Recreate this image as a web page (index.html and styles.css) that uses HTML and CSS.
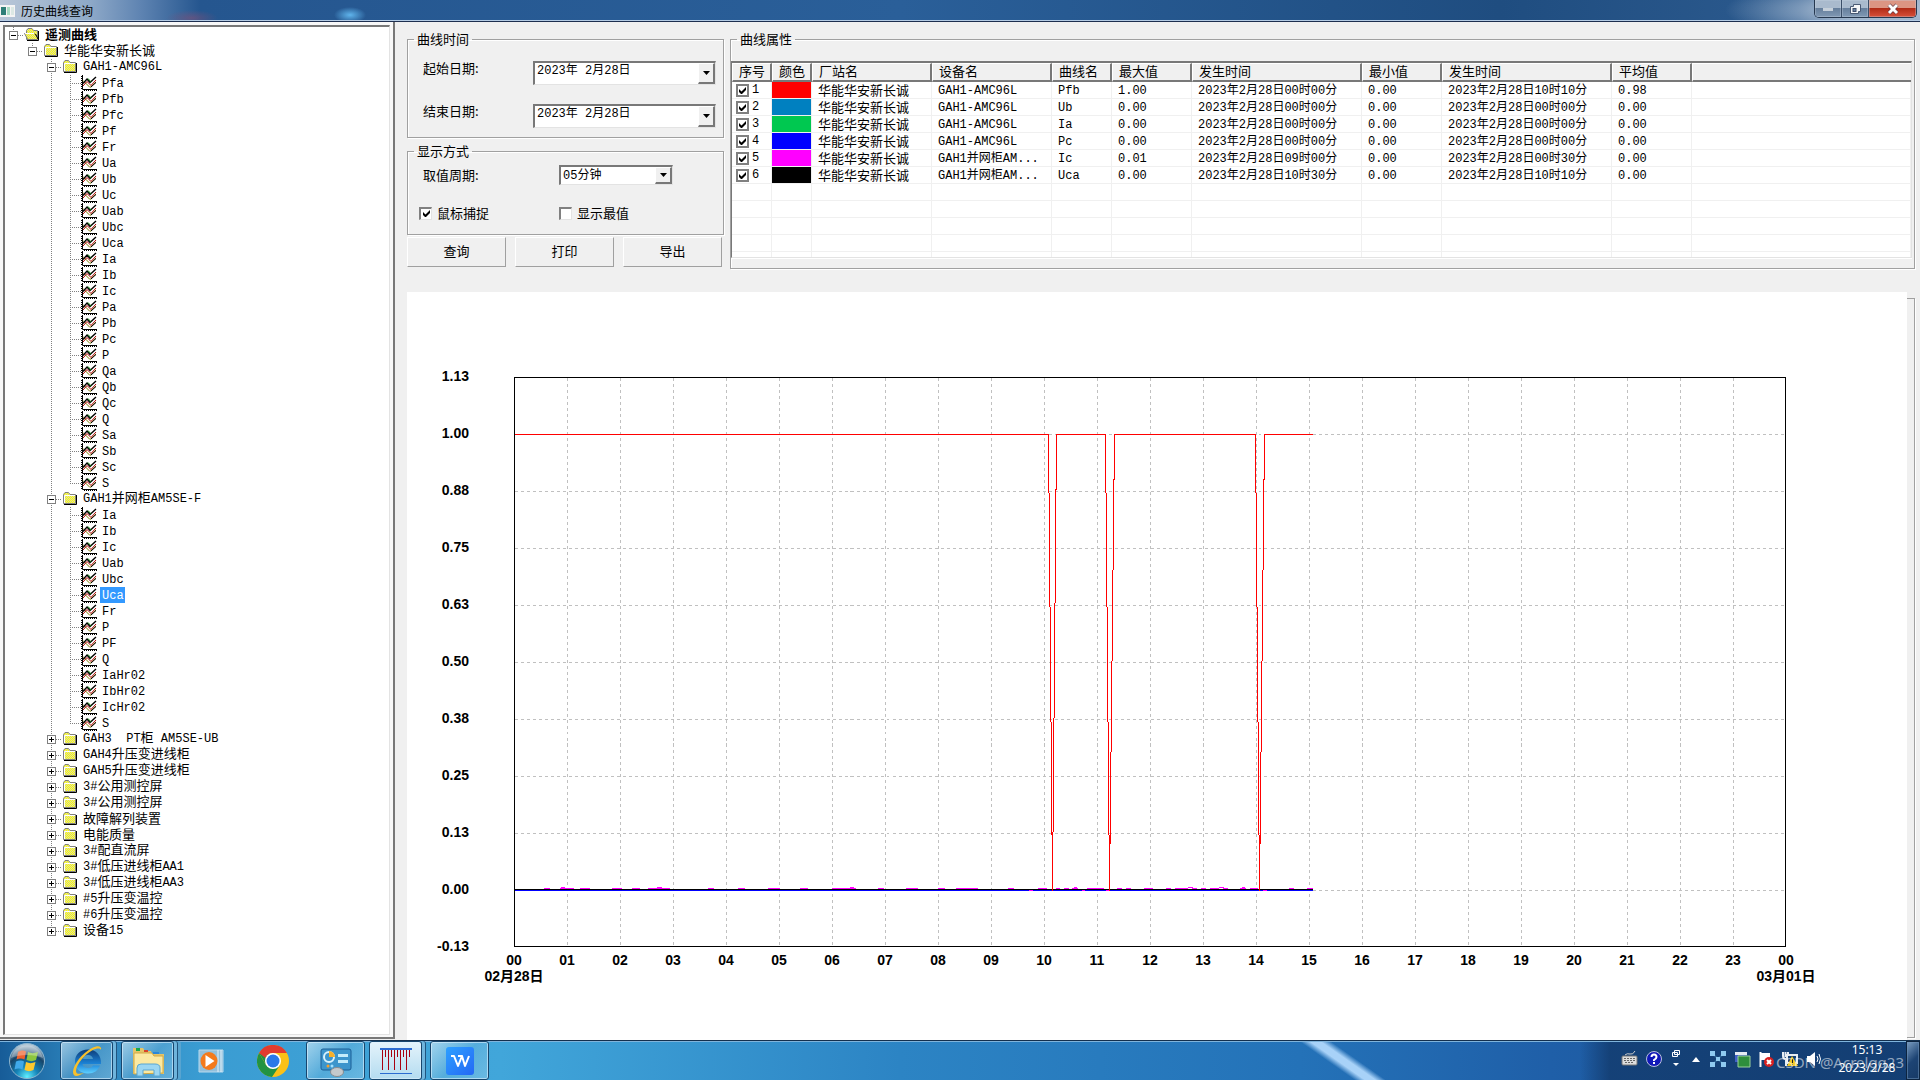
FILE: index.html
```html
<!DOCTYPE html>
<html lang="zh-CN">
<head>
<meta charset="utf-8">
<title>历史曲线查询</title>
<link rel="stylesheet" href="styles.css">
</head>
<body>
<svg class="sprites" aria-hidden="true">
  <defs>
    <pattern id="dither" width="2" height="2" patternUnits="userSpaceOnUse"><rect width="2" height="2" fill="#ffff00"/><path d="M0 0h1v1H0zM1 1h1v1H1z" fill="#d8d8b0"/></pattern>
    <linearGradient id="g-ie" x1="0" y1="0" x2="0" y2="1"><stop offset="0" stop-color="#0d3c78"/><stop offset=".6" stop-color="#1c84d8"/><stop offset="1" stop-color="#5fd0ff"/></linearGradient>
    <radialGradient id="g-orb" cx=".5" cy=".95" r=".9"><stop offset="0" stop-color="#5ff0ff"/><stop offset=".35" stop-color="#1583b8"/><stop offset=".7" stop-color="#174468"/><stop offset="1" stop-color="#b5c8d6"/></radialGradient>
    <linearGradient id="g-wps" x1="0" y1="0" x2="1" y2="1"><stop offset="0" stop-color="#2da0ff"/><stop offset="1" stop-color="#2468f5"/></linearGradient>
  </defs>
  <symbol id="folder" viewBox="0 0 16 16">
    <path d="M1.500 12.500V3.500L3 1.500H6.500L8 3.500H13.500V12.500z" fill="url(#dither)" stroke="#808080"/>
    <path d="M2.500 12V4.500H13" fill="none" stroke="#fff"/>
    <path d="M2 13.500H14.500V4" fill="none" stroke="#000"/>
  </symbol>
  <symbol id="folder-open" viewBox="0 0 16 16">
    <path d="M2.500 12.500V3.500L4 1.500H8L9.500 3.500H13.500V12.500z" fill="url(#dither)" stroke="#808080"/>
    <path d="M3.500 12L.5 6.500H10.500L12.500 9" fill="url(#dither)" stroke="#808080"/>
    <path d="M1 6.500H10" stroke="#fff"/>
    <path d="M3 13.500H14.500V4M11.500 7L14 12" fill="none" stroke="#000"/>
  </symbol>
  <symbol id="curve" viewBox="0 0 16 16">
    <path d="M1.500 0V14.500H16" fill="none" stroke="#000"/>
    <path d="M.5 1V14" stroke="#000" stroke-dasharray="1 1"/>
    <path d="M3 15.500H16" stroke="#000" stroke-dasharray="1 1"/>
    <path d="M2 5.500L9 12.500L15 7" fill="none" stroke="#808000"/>
    <path d="M2 11L6 6.500L10 10.500L15 5" fill="none" stroke="#b00000"/>
    <path d="M2 8.500L6 4L9 7.500L15 2" fill="none" stroke="#000" stroke-width="1.400"/>
    <path d="M7 3.500L10 7" stroke="#008000"/>
    <path d="M10 12L15 7.500" stroke="#000"/>
  </symbol>
</svg>

<header class="titlebar">
  <svg class="app-icon" viewBox="0 0 15 12"><rect width="15" height="12" fill="#f4f4f4"/><rect x="1" y="2" width="5" height="8" fill="#2f7f78"/><rect x="7" y="2" width="3" height="8" fill="#a9dcc4"/><rect x="11" y="2" width="3" height="8" fill="#dce8e4"/></svg>
  <h1>历史曲线查询</h1>
  <div class="caption">
    <button class="cap" aria-label="最小化"><svg width="12" height="12"><rect x="1" y="5" width="10" height="3" fill="#c6d0da"/></svg></button>
    <button class="cap" aria-label="还原"><svg width="14" height="12"><path d="M5.500 1.500h7v7h-2v2h-8v-7h3z" fill="#f4f6f8" stroke="#4a5a74"/><rect x="5" y="5.500" width="3" height="3" fill="#6b84a4" stroke="#3c4c68"/></svg></button>
    <button class="cap close" aria-label="关闭"><svg width="14" height="12"><path d="M3 2l8 8M11 2l-8 8" stroke="#5b3440" stroke-width="4"/><path d="M3 2l8 8M11 2l-8 8" stroke="#fff" stroke-width="3"/></svg></button>
  </div>
</header>

<main class="workspace">
  <nav class="tree-frame" aria-label="遥测曲线">
    <ul class="tree">
      <li><div class="node"><button class="toggle" aria-label="折叠"></button><i></i><svg><use href="#folder-open"/></svg><b>遥测曲线</b></div>
        <ul><li><div class="node"><button class="toggle" aria-label="折叠"></button><i></i><svg><use href="#folder"/></svg><span>华能华安新长诚</span></div>
          <ul>
            <li><div class="node"><button class="toggle" aria-label="折叠"></button><i></i><svg><use href="#folder"/></svg><span><code>GAH1-AMC96L</code></span></div>
              <ul>
                <li class="node leaf"><i></i><svg><use href="#curve"/></svg><code>Pfa</code></li>
                <li class="node leaf"><i></i><svg><use href="#curve"/></svg><code>Pfb</code></li>
                <li class="node leaf"><i></i><svg><use href="#curve"/></svg><code>Pfc</code></li>
                <li class="node leaf"><i></i><svg><use href="#curve"/></svg><code>Pf</code></li>
                <li class="node leaf"><i></i><svg><use href="#curve"/></svg><code>Fr</code></li>
                <li class="node leaf"><i></i><svg><use href="#curve"/></svg><code>Ua</code></li>
                <li class="node leaf"><i></i><svg><use href="#curve"/></svg><code>Ub</code></li>
                <li class="node leaf"><i></i><svg><use href="#curve"/></svg><code>Uc</code></li>
                <li class="node leaf"><i></i><svg><use href="#curve"/></svg><code>Uab</code></li>
                <li class="node leaf"><i></i><svg><use href="#curve"/></svg><code>Ubc</code></li>
                <li class="node leaf"><i></i><svg><use href="#curve"/></svg><code>Uca</code></li>
                <li class="node leaf"><i></i><svg><use href="#curve"/></svg><code>Ia</code></li>
                <li class="node leaf"><i></i><svg><use href="#curve"/></svg><code>Ib</code></li>
                <li class="node leaf"><i></i><svg><use href="#curve"/></svg><code>Ic</code></li>
                <li class="node leaf"><i></i><svg><use href="#curve"/></svg><code>Pa</code></li>
                <li class="node leaf"><i></i><svg><use href="#curve"/></svg><code>Pb</code></li>
                <li class="node leaf"><i></i><svg><use href="#curve"/></svg><code>Pc</code></li>
                <li class="node leaf"><i></i><svg><use href="#curve"/></svg><code>P</code></li>
                <li class="node leaf"><i></i><svg><use href="#curve"/></svg><code>Qa</code></li>
                <li class="node leaf"><i></i><svg><use href="#curve"/></svg><code>Qb</code></li>
                <li class="node leaf"><i></i><svg><use href="#curve"/></svg><code>Qc</code></li>
                <li class="node leaf"><i></i><svg><use href="#curve"/></svg><code>Q</code></li>
                <li class="node leaf"><i></i><svg><use href="#curve"/></svg><code>Sa</code></li>
                <li class="node leaf"><i></i><svg><use href="#curve"/></svg><code>Sb</code></li>
                <li class="node leaf"><i></i><svg><use href="#curve"/></svg><code>Sc</code></li>
                <li class="node leaf"><i></i><svg><use href="#curve"/></svg><code>S</code></li>
              </ul>
            </li>
            <li><div class="node"><button class="toggle" aria-label="折叠"></button><i></i><svg><use href="#folder"/></svg><span><code>GAH1</code>并网柜<code>AM5SE-F</code></span></div>
              <ul>
                <li class="node leaf"><i></i><svg><use href="#curve"/></svg><code>Ia</code></li>
                <li class="node leaf"><i></i><svg><use href="#curve"/></svg><code>Ib</code></li>
                <li class="node leaf"><i></i><svg><use href="#curve"/></svg><code>Ic</code></li>
                <li class="node leaf"><i></i><svg><use href="#curve"/></svg><code>Uab</code></li>
                <li class="node leaf"><i></i><svg><use href="#curve"/></svg><code>Ubc</code></li>
                <li class="node leaf"><i></i><svg><use href="#curve"/></svg><code class="selected">Uca</code></li>
                <li class="node leaf"><i></i><svg><use href="#curve"/></svg><code>Fr</code></li>
                <li class="node leaf"><i></i><svg><use href="#curve"/></svg><code>P</code></li>
                <li class="node leaf"><i></i><svg><use href="#curve"/></svg><code>PF</code></li>
                <li class="node leaf"><i></i><svg><use href="#curve"/></svg><code>Q</code></li>
                <li class="node leaf"><i></i><svg><use href="#curve"/></svg><code>IaHr02</code></li>
                <li class="node leaf"><i></i><svg><use href="#curve"/></svg><code>IbHr02</code></li>
                <li class="node leaf"><i></i><svg><use href="#curve"/></svg><code>IcHr02</code></li>
                <li class="node leaf"><i></i><svg><use href="#curve"/></svg><code>S</code></li>
              </ul>
            </li>
            <li><div class="node"><button class="toggle closed" aria-label="展开"></button><i></i><svg><use href="#folder"/></svg><span><code>GAH3  PT</code>柜<code> AM5SE-UB</code></span></div></li>
            <li><div class="node"><button class="toggle closed" aria-label="展开"></button><i></i><svg><use href="#folder"/></svg><span><code>GAH4</code>升压变进线柜</span></div></li>
            <li><div class="node"><button class="toggle closed" aria-label="展开"></button><i></i><svg><use href="#folder"/></svg><span><code>GAH5</code>升压变进线柜</span></div></li>
            <li><div class="node"><button class="toggle closed" aria-label="展开"></button><i></i><svg><use href="#folder"/></svg><span><code>3#</code>公用测控屏</span></div></li>
            <li><div class="node"><button class="toggle closed" aria-label="展开"></button><i></i><svg><use href="#folder"/></svg><span><code>3#</code>公用测控屏</span></div></li>
            <li><div class="node"><button class="toggle closed" aria-label="展开"></button><i></i><svg><use href="#folder"/></svg><span>故障解列装置</span></div></li>
            <li><div class="node"><button class="toggle closed" aria-label="展开"></button><i></i><svg><use href="#folder"/></svg><span>电能质量</span></div></li>
            <li><div class="node"><button class="toggle closed" aria-label="展开"></button><i></i><svg><use href="#folder"/></svg><span><code>3#</code>配直流屏</span></div></li>
            <li><div class="node"><button class="toggle closed" aria-label="展开"></button><i></i><svg><use href="#folder"/></svg><span><code>3#</code>低压进线柜<code>AA1</code></span></div></li>
            <li><div class="node"><button class="toggle closed" aria-label="展开"></button><i></i><svg><use href="#folder"/></svg><span><code>3#</code>低压进线柜<code>AA3</code></span></div></li>
            <li><div class="node"><button class="toggle closed" aria-label="展开"></button><i></i><svg><use href="#folder"/></svg><span><code>#5</code>升压变温控</span></div></li>
            <li><div class="node"><button class="toggle closed" aria-label="展开"></button><i></i><svg><use href="#folder"/></svg><span><code>#6</code>升压变温控</span></div></li>
            <li><div class="node"><button class="toggle closed" aria-label="展开"></button><i></i><svg><use href="#folder"/></svg><span>设备<code>15</code></span></div></li>
          </ul>
        </li></ul>
      </li>
    </ul>
  </nav>

  <section class="content">
    <div class="top">
      <form class="query">
        <fieldset class="group dates">
          <legend>曲线时间</legend>
          <div class="field"><label for="start">起始日期:</label><span class="drop date"><input id="start" type="text" value="2023年 2月28日"><button type="button" class="arrow" aria-label="选择起始日期"></button></span></div>
          <div class="field"><label for="end">结束日期:</label><span class="drop date"><input id="end" type="text" value="2023年 2月28日"><button type="button" class="arrow" aria-label="选择结束日期"></button></span></div>
        </fieldset>
        <fieldset class="group mode">
          <legend>显示方式</legend>
          <div class="field"><label for="period">取值周期:</label><span class="drop period"><select id="period"><option>05分钟</option></select><span class="arrow"></span></span></div>
          <div class="checks">
            <label><input type="checkbox" checked>鼠标捕捉</label>
            <label><input type="checkbox">显示最值</label>
          </div>
        </fieldset>
        <div class="actions"><button type="button">查询</button><button type="button">打印</button><button type="button">导出</button></div>
      </form>

      <fieldset class="group props">
        <legend>曲线属性</legend>
        <div class="list">
          <table>
            <colgroup><col class="w40"><col class="w40"><col class="w120"><col class="w120"><col class="w60"><col class="w80"><col class="w170"><col class="w80"><col class="w170"><col class="w80"><col></colgroup>
            <thead><tr><th>序号</th><th>颜色</th><th>厂站名</th><th>设备名</th><th>曲线名</th><th>最大值</th><th>发生时间</th><th>最小值</th><th>发生时间</th><th>平均值</th><th></th></tr></thead>
            <tbody>
              <tr><td class="no"><label><input type="checkbox" checked>1</label></td><td class="red"></td><td class="site">华能华安新长诚</td><td>GAH1-AMC96L</td><td>Pfb</td><td>1.00</td><td>2023年2月28日00时00分</td><td>0.00</td><td>2023年2月28日10时10分</td><td>0.98</td><td></td></tr>
              <tr><td class="no"><label><input type="checkbox" checked>2</label></td><td class="azure"></td><td class="site">华能华安新长诚</td><td>GAH1-AMC96L</td><td>Ub</td><td>0.00</td><td>2023年2月28日00时00分</td><td>0.00</td><td>2023年2月28日00时00分</td><td>0.00</td><td></td></tr>
              <tr><td class="no"><label><input type="checkbox" checked>3</label></td><td class="green"></td><td class="site">华能华安新长诚</td><td>GAH1-AMC96L</td><td>Ia</td><td>0.00</td><td>2023年2月28日00时00分</td><td>0.00</td><td>2023年2月28日00时00分</td><td>0.00</td><td></td></tr>
              <tr><td class="no"><label><input type="checkbox" checked>4</label></td><td class="blue"></td><td class="site">华能华安新长诚</td><td>GAH1-AMC96L</td><td>Pc</td><td>0.00</td><td>2023年2月28日00时00分</td><td>0.00</td><td>2023年2月28日00时00分</td><td>0.00</td><td></td></tr>
              <tr><td class="no"><label><input type="checkbox" checked>5</label></td><td class="magenta"></td><td class="site">华能华安新长诚</td><td>GAH1并网柜AM...</td><td>Ic</td><td>0.01</td><td>2023年2月28日09时00分</td><td>0.00</td><td>2023年2月28日00时30分</td><td>0.00</td><td></td></tr>
              <tr><td class="no"><label><input type="checkbox" checked>6</label></td><td class="black"></td><td class="site">华能华安新长诚</td><td>GAH1并网柜AM...</td><td>Uca</td><td>0.00</td><td>2023年2月28日10时30分</td><td>0.00</td><td>2023年2月28日10时10分</td><td>0.00</td><td></td></tr>
              <tr><td></td><td></td><td></td><td></td><td></td><td></td><td></td><td></td><td></td><td></td><td></td></tr>
              <tr><td></td><td></td><td></td><td></td><td></td><td></td><td></td><td></td><td></td><td></td><td></td></tr>
              <tr><td></td><td></td><td></td><td></td><td></td><td></td><td></td><td></td><td></td><td></td><td></td></tr>
              <tr><td></td><td></td><td></td><td></td><td></td><td></td><td></td><td></td><td></td><td></td><td></td></tr>
              <tr><td></td><td></td><td></td><td></td><td></td><td></td><td></td><td></td><td></td><td></td><td></td></tr>
            </tbody>
          </table>
        </div>
      </fieldset>
    </div>

    <div class="chart-row">
      <div class="chart">
        <svg viewBox="0 0 1500 746" preserveAspectRatio="xMinYMin meet" role="img" aria-label="历史曲线">
          <g class="plot" transform="translate(.5 .5)">
            <rect x="107" y="85" width="1271" height="569" stroke="#000"/>
            <path class="grid" d="M160 85V654M213 85V654M266 85V654M319 85V654M372 85V654M425 85V654M478 85V654M531 85V654M584 85V654M637 85V654M690 85V654M743 85V654M796 85V654M849 85V654M902 85V654M955 85V654M1008 85V654M1061 85V654M1114 85V654M1167 85V654M1220 85V654M1273 85V654M1326 85V654"/>
            <path class="grid" d="M107 142H1378M107 199H1378M107 256H1378M107 313H1378M107 370H1378M107 427H1378M107 484H1378M107 541H1378M107 598H1378"/>
            <path d="M107 598H905" stroke="#00f"/>
            <path d="M107 597H905" stroke="#000"/>
            <path d="M136 596H142M152 596H166M172 596H182M204 596H214M224 596H232M240 596H262M300 596H306M330 596H337M360 596H372M392 596H400M424 596H448M470 596H476M498 596H510M530 596H537M548 596H570M600 596H606M630 596H639M648 596H652M656 596H661M664 596H670M679 596H696M709 596H714M718 596H723M736 596H745M758 596H763M767 596H780M784 596H789M793 596H798M802 596H811M815 596H820M832 596H838M842 596H850M881 596H886M899 596H905M153 595H157M249 595H254M442 595H446M666 595H669M780 595H785M811 595H816M834 595H837M621 598H625M674 598H677M698 598H701M855 598H859" stroke="#f0f"/>
            <path d="M107 142H641L645 598L649 142H698L702 598L707 142H848L852 598L857 142H905" stroke="#f00"/>
          </g>
          <g class="ylabels">
            <text x="62" y="89">1.13</text><text x="62" y="146">1.00</text><text x="62" y="203">0.88</text><text x="62" y="260">0.75</text><text x="62" y="317">0.63</text><text x="62" y="374">0.50</text><text x="62" y="431">0.38</text><text x="62" y="488">0.25</text><text x="62" y="545">0.13</text><text x="62" y="602">0.00</text><text x="62" y="659">-0.13</text>
          </g>
          <g class="xlabels">
            <text x="107" y="673">00</text><text x="160" y="673">01</text><text x="213" y="673">02</text><text x="266" y="673">03</text><text x="319" y="673">04</text><text x="372" y="673">05</text><text x="425" y="673">06</text><text x="478" y="673">07</text><text x="531" y="673">08</text><text x="584" y="673">09</text><text x="637" y="673">10</text><text x="690" y="673">11</text><text x="743" y="673">12</text><text x="796" y="673">13</text><text x="849" y="673">14</text><text x="902" y="673">15</text><text x="955" y="673">16</text><text x="1008" y="673">17</text><text x="1061" y="673">18</text><text x="1114" y="673">19</text><text x="1167" y="673">20</text><text x="1220" y="673">21</text><text x="1273" y="673">22</text><text x="1326" y="673">23</text><text x="1379" y="673">00</text>
            <text x="107" y="689">02月28日</text><text x="1379" y="689">03月01日</text>
          </g>
        </svg>
      </div>
      <div class="edge"></div>
    </div>
  </section>
</main>

<footer class="taskbar">
  <button class="orb" aria-label="开始"><svg width="38" height="38" viewBox="0 0 38 38"><circle cx="19" cy="19" r="17.500" fill="url(#g-orb)" stroke="#8fb6cf"/><path d="M10 10c3-2 6-2 8-.5l-1.500 8c-3-1.500-5-1.500-8 0z" fill="#f0622d"/><path d="M20 10c3 1.500 6 1.500 10 0l-2 8c-3 1.500-6 1.500-9.500 0z" fill="#8cc63e"/><path d="M8 19.500c3-1.500 6-1.500 8 0l-1.500 8c-2.500-1.500-5-1.500-8 0z" fill="#3fa9ea"/><path d="M18 20c3 1.500 6 1.500 9.500 0l-2 8c-3 1.500-6 1.500-9 0z" fill="#fdc92e"/><path d="M3 16a16.500 16.500 0 0 1 32 0c-9-4-23-4-32 0z" fill="#fff" opacity=".3"/></svg></button>
  <button class="task open stack" aria-label="浏览器"><svg width="34" height="34" viewBox="0 0 34 34"><path d="M18 5.500c-8 0-13 5-13 12s5 12 13 12c6 0 10-3 12-8h-7c-1 2-3 2.500-5 2.500-3 0-5-1.500-5.500-4H31c.5-9-5-14.500-13-14.500zm-5 9.500c.5-2.500 2.500-4 5-4s4.500 1.500 5 4z" fill="url(#g-ie)"/><path d="M31 6c1-4-3-5-9-2C12 9 3 21 3 28c0 6 6 4 11 1-5 1.500-8 1-8-2 0-6 9-17 16-20.500 5-2.500 8-2.500 9-.5z" fill="#f7c02c"/></svg></button>
  <button class="task open stack stack2" aria-label="资源管理器"><svg width="34" height="34" viewBox="0 0 34 34"><path d="M2 6V4h10l2 3h6l1 3h12v20H2z" fill="#e5c466"/><path d="M3 9h18l2 3h9v17l-29 1z" fill="#fbe9a2" stroke="#cfa948"/><path d="M5 4h4v3H5z" fill="#15a84a"/><path d="M13 6h4v2h-4z" fill="#d8432c"/><path d="M22 8h6v2h-6z" fill="#2b87d8"/><path d="M6 32V24q0-4 4-4h14q5 0 5 4v8h-6v-6H12v6z" fill="#9bd6f2" stroke="#5aa6d2"/></svg></button>
  <button class="task plain" aria-label="播放器"><svg width="30" height="30" viewBox="0 0 30 30"><path d="M3 4h24v22H3z" fill="#a9c9df" opacity=".8" stroke="#d8eaf5"/><path d="M22 4v22M25 4v22" stroke="#e4f3fb"/><ellipse cx="13" cy="15" rx="8.500" ry="9" fill="#f47a1c"/><path d="M9.500 9l9 6-9 6z" fill="#fff"/></svg></button>
  <button class="task plain" aria-label="Chrome"><svg width="32" height="32" viewBox="0 0 32 32"><circle cx="16" cy="16" r="16" fill="#fbc116"/><path d="M2.100 8A16 16 0 0 0 15 32L23 20 16 24 9 20z" fill="#229342"/><path d="M2.100 8l7 12 5-10z" fill="#229342"/><path d="M2.100 8A16 16 0 0 1 29.900 8H16A8 8 0 0 0 8.500 13z" fill="#e33b2e"/><circle cx="16" cy="16" r="8" fill="#fff"/><circle cx="16" cy="16" r="6.500" fill="#2a79e8"/></svg></button>
  <button class="task open" aria-label="控制面板"><svg width="34" height="34" viewBox="0 0 34 34"><rect x="2" y="5" width="30" height="21" rx="2" fill="#3c95cc" stroke="#1c5f96"/><circle cx="10" cy="13" r="5" fill="none" stroke="#d7f1fc" stroke-width="2"/><path d="M10 13V7a6 6 0 0 1 6 6z" fill="#f6b02a"/><rect x="19" y="10" width="10" height="3" fill="#c3ecfb"/><rect x="19" y="16" width="10" height="3" fill="#c3ecfb"/><circle cx="9" cy="22" r="1.500" fill="#f6a02a"/><circle cx="13" cy="22" r="1.500" fill="#9fe0ff"/><ellipse cx="18" cy="28" rx="6.500" ry="4.500" fill="#c5c9cc" stroke="#858b90"/></svg></button>
  <button class="task open active stack" aria-label="历史曲线查询"><svg width="34" height="34" viewBox="0 0 34 34"><path d="M1 5h32" stroke="#2b6bd0" stroke-width="2"/><path d="M1 29.500h32" stroke="#2b6bd0"/><path d="M3.500 6v20M9.500 6v20M15.500 6v20M21.500 6v20M27.500 6v20M6.500 6v7M12.500 6v7M18.500 6v7M24.500 6v7M30.500 6v7" stroke="#a80010"/></svg></button>
  <button class="task open" aria-label="WPS"><svg width="34" height="34" viewBox="0 0 34 34"><rect x="3" y="3" width="28" height="28" rx="3" fill="url(#g-wps)"/><path d="M8 12h3l4 10 4-10 3 10 4-10M15 12h4" fill="none" stroke="#fff" stroke-width="2" stroke-linejoin="round"/></svg></button>

  <div class="tray">
    <svg width="18" height="18"><path d="M4 5q2-2 5-1t5-3" fill="none" stroke="#ccc"/><rect x="1" y="6" width="15" height="9" rx="1" fill="#ddd" stroke="#777"/><path d="M3 8.500h11M3 10.500h11M4 12.500h9" stroke="#666" stroke-dasharray="2 1"/></svg>
    <svg width="18" height="18" viewBox="0 0 18 18"><circle cx="9" cy="9" r="7.500" fill="#1018b8" stroke="#b8bedc"/><path d="M6.500 7q0-2.500 2.500-2.500T11.500 7q0 1.500-2.500 3v1M9 12v2" fill="none" stroke="#fff" stroke-width="2"/></svg>
    <svg width="14" height="22" viewBox="-2 0 14 22"><path d="M3.500 2.500h5v4h-5zM1.500 4.500h5v4h-5z" fill="#1b467c" stroke="#fff"/><path d="M2 15h6l-3 3z" fill="#fff"/></svg>
    <svg width="14" height="10" viewBox="-2 0 14 10"><path d="M1 8h8L5 3z" fill="#fff"/></svg>
    <svg width="18" height="18"><path d="M4 4l10 10M14 4L4 14" stroke="#2a5f8f" stroke-width="2"/><path d="M1 1h5v5H1zM12 1h5v5h-5zM1 12h5v5H1zM12 12h5v5h-5zM7 7h4v4H7z" fill="#8fcaf0"/></svg>
    <svg width="18" height="18"><path d="M2 2h12v10H2z" fill="#4060c8"/><path d="M2 2h12v3H2z" fill="#e4ecf4"/><path d="M5 6h12v11H5z" fill="#2e8f3c" stroke="#9ad09a"/></svg>
    <svg width="18" height="18"><path d="M3.500 2v15" stroke="#fff" stroke-width="2"/><path d="M4 3h9v7H4z" fill="#fff"/><circle cx="12" cy="12" r="5" fill="#d82020"/><path d="M10 10l4 4M14 10l-4 4" stroke="#fff" stroke-width="2"/></svg>
    <svg width="18" height="18"><path d="M2 2v4q0 3 3 3v7M7 2v4M4.500 2v5M6 5h10v8H6z" fill="none" stroke="#e8edf2" stroke-width="2"/><path d="M11 6l6 10H6z" fill="#f4cc24"/><path d="M11.500 9v4M11.500 14v1" stroke="#222"/></svg>
    <svg width="18" height="18"><path d="M2 6h3l5-4v14l-5-4H2z" fill="#fff"/><path d="M12 6q2 3 0 6M14 4q3 5 0 10" fill="none" stroke="#fff"/></svg>
    <time class="clock"><span>15:13</span><span>2023/2/28</span></time>
    <span class="watermark">CSDN @Acrelgq23</span>
  </div>
  <button class="peek" aria-label="显示桌面"></button>
</footer>
</body>
</html>
```
FILE: styles.css
```css
* { box-sizing: border-box; }

body {
  margin: 0;
  min-height: 100vh;
  display: flex;
  flex-direction: column;
  background: #f0f0f0;
  color: #000;
  font: 13px/16px "Noto Sans CJK SC", sans-serif;
}

button, input, select { font: inherit; color: inherit; margin: 0; padding: 0; border: 0; border-radius: 0; }
ul { list-style: none; margin: 0; padding: 0; }
code { font: 12px/16px "Liberation Mono", monospace; white-space: pre; }
.sprites { position: absolute; width: 0; height: 0; }

/* title bar */
.titlebar {
  height: 22px;
  display: flex;
  align-items: center;
  padding-right: 3px;
  border-bottom: 1px solid #1e2f50;
  box-shadow: inset 0 -1px #b4cbe4;
  background:
    radial-gradient(ellipse 26px 8px at 192px 18px, #80507899, transparent),
    radial-gradient(ellipse 16px 8px at 350px 15px, #5fb4ec, transparent),
    radial-gradient(ellipse 140px 30px at 1865px 10px, #c2d0e0, transparent),
    linear-gradient(90deg, #b9c7d8 0, #8ea9c8 90px, #5f84b2 140px, #25568f 200px, #2a5f99 900px, #1f4d80 1500px, #2c5a8e 1800px, #7c98b8 100%);
}
.titlebar h1 { margin: 0 auto 0 6px; font-size: 12px; font-weight: 400; line-height: 20px; }
.app-icon { width: 15px; height: 12px; }
.caption { display: flex; align-self: flex-start; height: 18px; border: 1px solid #26384f; border-top: 0; border-radius: 0 0 5px 5px; overflow: hidden; }
.cap { width: 27px; display: flex; justify-content: center; align-items: center; border-right: 1px solid #3a4e68; background: linear-gradient(#a9bacd 0 45%, #667f9c 50%, #8199b4); box-shadow: inset 0 0 0 1px #c9d6e455; }
.cap.close { width: 47px; border-right: 0; background: linear-gradient(#dc9583 0 45%, #b22c17 50%, #d8503a); }

/* two-pane workspace */
.workspace { flex: 1; display: flex; }
.tree-frame {
  width: 395px;
  flex: none;
  margin-bottom: 1px;
  padding: 3px 3px 2px 3px;
  border-right: 2px solid #787878;
  border-bottom: 2px solid #787878;
  background: #f8f8f8;
}
.tree { height: 100%; background: #fff; border: 2px solid #787878; border-right: 1px solid #e3e3e3; border-bottom: 1px solid #e3e3e3; }
.tree ul { padding-left: 19px; }
.tree li { background: repeating-linear-gradient(#808080 0 1px, #fff 1px 2px) 8px 0 / 1px 100% no-repeat; }
.tree li:last-child { background-size: 1px 8px; }
.node { display: flex; align-items: center; height: 16px; white-space: nowrap; }
.node i { width: 6px; height: 1px; background: repeating-linear-gradient(90deg, #808080 0 1px, #fff 1px 2px); }
.node.leaf i { width: 11px; margin-left: 8px; }
.node svg { width: 16px; height: 16px; flex: none; }
.node > span, .node > b, .node > code { margin-left: 3px; padding: 0 1px 0 2px; }
.node > b, .node > span { line-height: 14px; padding-bottom: 2px; }
.node > code { line-height: 14px; padding-top: 2px; }
.selected { background: #3399ff; color: #fff; }
.toggle {
  width: 9px; height: 9px; margin-left: 4px; flex: none;
  border: 1px solid #808080;
  background: linear-gradient(#000, #000) center / 5px 1px no-repeat #fff;
}
.toggle.closed { background: linear-gradient(#000, #000) center / 5px 1px no-repeat, linear-gradient(#000, #000) center / 1px 5px no-repeat #fff; }

.content { flex: 1; min-width: 0; display: flex; flex-direction: column; gap: 23px; padding: 10px 0 0 12px; }
.top { display: flex; gap: 6px; padding-right: 5px; }

/* etched group boxes */
.group { min-width: 0; margin: 0; padding: 0; border: 1px solid #a0a0a0; box-shadow: 1px 1px #fff, inset 1px 1px #fff; }
.group legend { margin-left: 6px; padding: 0 3px; line-height: 14px; }

.query { width: 317px; flex: none; display: flex; flex-direction: column; }
.dates { height: 106px; padding-top: 15px; }
.field { display: flex; justify-content: space-between; align-items: flex-start; }
.dates .field { margin-bottom: 19px; padding: 0 7px 0 15px; }
.dates .field label { line-height: 14px; }
.mode { height: 91px; margin-top: 6px; padding-top: 7px; }
.mode .field { padding: 0 50px 0 15px; }
.mode .field label { line-height: 20px; }

.drop { display: flex; background: #fff; border: 2px solid #787878; border-right: 1px solid #e3e3e3; border-bottom: 1px solid #e3e3e3; }
.drop.date { width: 183px; height: 24px; }
.drop.period { width: 114px; height: 20px; }
.drop input, .drop select {
  flex: 1; min-width: 0; padding-left: 2px; background: none; appearance: none; outline: 0;
  font: 12px/16px "Liberation Mono", "Noto Sans CJK SC", monospace;
}
.drop input { height: 16px; }
.arrow {
  width: 17px; flex: none;
  border: 1px solid #fff; border-right: 2px solid #787878; border-bottom: 2px solid #787878;
  background: #f0f0f0 url("data:image/svg+xml,%3Csvg xmlns='http://www.w3.org/2000/svg' width='7' height='4'%3E%3Cpath d='M0 0h7L3.500 4z'/%3E%3C/svg%3E") center no-repeat;
}

.checks { display: grid; grid-template-columns: 140px 1fr; margin: 20px 0 0 11px; }
.checks label { display: flex; align-items: center; gap: 5px; }
input[type="checkbox"] {
  appearance: none; width: 13px; height: 13px; flex: none;
  background: #fff center / 9px 9px no-repeat;
  border: 2px solid #808080; border-right: 1px solid #e3e3e3; border-bottom: 1px solid #e3e3e3;
}
input[type="checkbox"]:checked { background-image: url("data:image/svg+xml,%3Csvg xmlns='http://www.w3.org/2000/svg' viewBox='0 0 9 9'%3E%3Cpath d='M1 3v3l2 2h1l4-4V1L3.500 5.500z'/%3E%3C/svg%3E"); }

.actions { display: flex; gap: 9px; margin-top: 2px; }
.actions button { width: 99px; height: 30px; padding-bottom: 2px; background: #f0f0f0; border: 1px solid #fff; border-right-color: #a0a0a0; border-bottom-color: #a0a0a0; }

/* curve table */
.props { flex: 1; height: 237px; padding-top: 15px; }
.list { height: 197px; margin-right: 2px; overflow: hidden; background: #fff; border: 2px solid #787878; border-left-width: 1px; border-right: 1px solid #e3e3e3; border-bottom: 1px solid #e3e3e3; box-shadow: 0 1px #fff; }
table { width: 100%; table-layout: fixed; border-collapse: separate; border-spacing: 0; }
.w40 { width: 40px; } .w60 { width: 60px; } .w80 { width: 80px; } .w120 { width: 120px; } .w170 { width: 170px; }
th {
  height: 19px; padding: 0 0 2px 6px; text-align: left; font-weight: 400; line-height: 14px; white-space: nowrap;
  background: #f0f0f0; border: 1px solid #fff; border-right: 2px solid #787878; border-bottom: 2px solid #787878;
}
th:last-child { border-right: 0; }
td {
  height: 17px; padding: 2px 0 0 6px; white-space: nowrap;
  border-right: 1px solid #f0f0f0; border-bottom: 1px solid #f0f0f0;
  font: 12px/14px "Liberation Mono", "Noto Sans CJK SC", monospace;
}
td.site { font: 13px/16px "Noto Sans CJK SC", sans-serif; padding-top: 0; }
td.no { padding: 0 0 0 4px; }
.no label { display: flex; align-items: center; gap: 3px; }
.no input[type="checkbox"] { border: 2px solid #808080; }
.red { background: #f00; } .azure { background: #0080c0; } .green { background: #00c850; }
.blue { background: #00f; } .magenta { background: #f0f; } .black { background: #000; }

/* chart */
.chart-row { flex: 1; display: flex; padding-right: 5px; }
.chart { flex: 1; background: #fff; }
.chart svg { display: block; width: 100%; }
.edge { width: 8px; margin: 6px 0 2px; border: 1px solid #a0a0a0; border-left: 0; box-shadow: 1px 1px #fff; }
.plot { fill: none; stroke-width: 1; shape-rendering: crispEdges; }
.grid { stroke: #c0c0c0; stroke-dasharray: 3 3; }
.ylabels, .xlabels { font: bold 14px "Liberation Sans", "Noto Sans CJK SC", sans-serif; }
.ylabels { text-anchor: end; }
.xlabels { text-anchor: middle; }

/* taskbar */
.taskbar {
  height: 40px;
  display: flex;
  border-top: 1px solid #14304e;
  box-shadow: inset 0 1px #7fb4dc;
  background:
    linear-gradient(90deg, transparent 1580px, #123a6ccc 1610px),
    linear-gradient(35deg, transparent 777px, #a8d2f8 783px 789px, transparent 795px),
    linear-gradient(90deg, #175c98 0, #2a7fb8 70px, #3a9cd2 200px, #41a6da 500px, #2c84c4 900px, #2472b8 1300px, #1f5fa8 1550px, #1a5090 100%);
}
.taskbar button { background: none; display: flex; align-items: center; justify-content: center; }
.orb { width: 54px; margin-right: 6px; }
.taskbar .task { width: 59px; margin-right: 4px; }
.taskbar .task.open { border: 1px solid #17466e; border-radius: 3px; background: linear-gradient(135deg, #d4ecf8aa, #8cc4e444 50%, #a8d8f066); box-shadow: inset 0 0 0 1px #e0f2ff99; }
.taskbar .task.stack { width: 53px; margin-right: 8px; box-shadow: inset 0 0 0 1px #e0f2ff99, 3px 0 0 #6fb4dc, 4px 0 0 #1f5580; }
.taskbar .task.stack2 { box-shadow: inset 0 0 0 1px #e0f2ff99, 3px 0 0 #6fb4dc, 4px 0 0 #1f5580, 7px 0 0 #58a4d0; }
.taskbar .task.active { background: linear-gradient(#e4f3fb, #b4dcf0); }
.taskbar .task.plain { width: 58px; }
.tray { position: relative; margin-left: auto; display: flex; align-items: center; gap: 6px; padding: 0 1px 3px 0; }
.tray svg { flex: none; }
.clock { width: 76px; display: flex; flex-direction: column; align-items: center; color: #fff; font: 12px/18px "Noto Sans", sans-serif; }
.watermark { position: absolute; right: 2px; top: 10px; color: #ffffff8c; font: 15px/22px "Noto Sans", sans-serif; white-space: nowrap; }
.taskbar .peek { width: 14px; border: 1px solid #0c2440; background: linear-gradient(135deg, #7a9cc0, #1d4474 50%, #173a66); box-shadow: inset 0 0 0 1px #6f93b888; }
```
